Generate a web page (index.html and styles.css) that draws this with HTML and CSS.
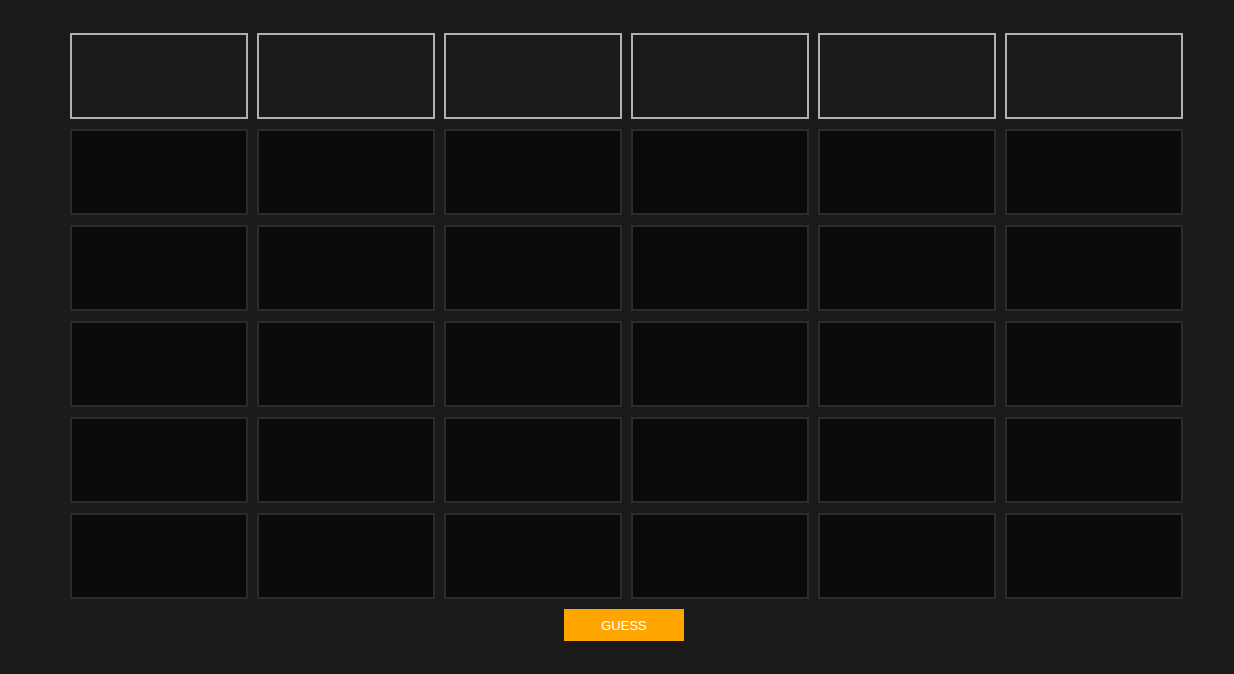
FILE: index.html
```html
<!DOCTYPE html>
<html lang="en">
<head>
<meta charset="utf-8">
<title>Guess</title>
<link rel="stylesheet" href="styles.css">
</head>
<body>
<main class="game">
  <div class="board">
    <div class="row row-active">
      <div class="cell"></div><div class="cell"></div><div class="cell"></div><div class="cell"></div><div class="cell"></div><div class="cell"></div>
    </div>
    <div class="row">
      <div class="cell"></div><div class="cell"></div><div class="cell"></div><div class="cell"></div><div class="cell"></div><div class="cell"></div>
    </div>
    <div class="row">
      <div class="cell"></div><div class="cell"></div><div class="cell"></div><div class="cell"></div><div class="cell"></div><div class="cell"></div>
    </div>
    <div class="row">
      <div class="cell"></div><div class="cell"></div><div class="cell"></div><div class="cell"></div><div class="cell"></div><div class="cell"></div>
    </div>
    <div class="row">
      <div class="cell"></div><div class="cell"></div><div class="cell"></div><div class="cell"></div><div class="cell"></div><div class="cell"></div>
    </div>
    <div class="row">
      <div class="cell"></div><div class="cell"></div><div class="cell"></div><div class="cell"></div><div class="cell"></div><div class="cell"></div>
    </div>
  </div>
  <div class="actions">
    <button class="guess-btn" type="button">GUESS</button>
  </div>
</main>
</body>
</html>
```

FILE: styles.css
```css
html, body {
  margin: 0;
  padding: 0;
  background: #1a1a1a;
  height: 100%;
}
body {
  font-family: "Liberation Sans", Arial, sans-serif;
}
.game {
  width: 1113px;
  padding: 33px 0 0 70px;
  display: flex;
  flex-direction: column;
}
.board {
  display: flex;
  flex-direction: column;
  gap: 10px;
}
.row {
  display: grid;
  grid-template-columns: repeat(6, 178px);
  column-gap: 9px;
}
.cell {
  box-sizing: border-box;
  height: 86px;
  background: #0a0a0a;
  border: 2px solid #2b2b2b;
}
.row-active .cell {
  background: #1a1a1a;
  border-color: #b0b0b0;
}
.actions {
  display: flex;
  padding: 10px 0 0 494px;
}
.guess-btn {
  width: 120px;
  height: 32px;
  border: none;
  background: #ffa500;
  color: #ffffff;
  font-family: "Liberation Sans", Arial, sans-serif;
  font-size: 13px;
  padding: 0;
  cursor: pointer;
}
```
